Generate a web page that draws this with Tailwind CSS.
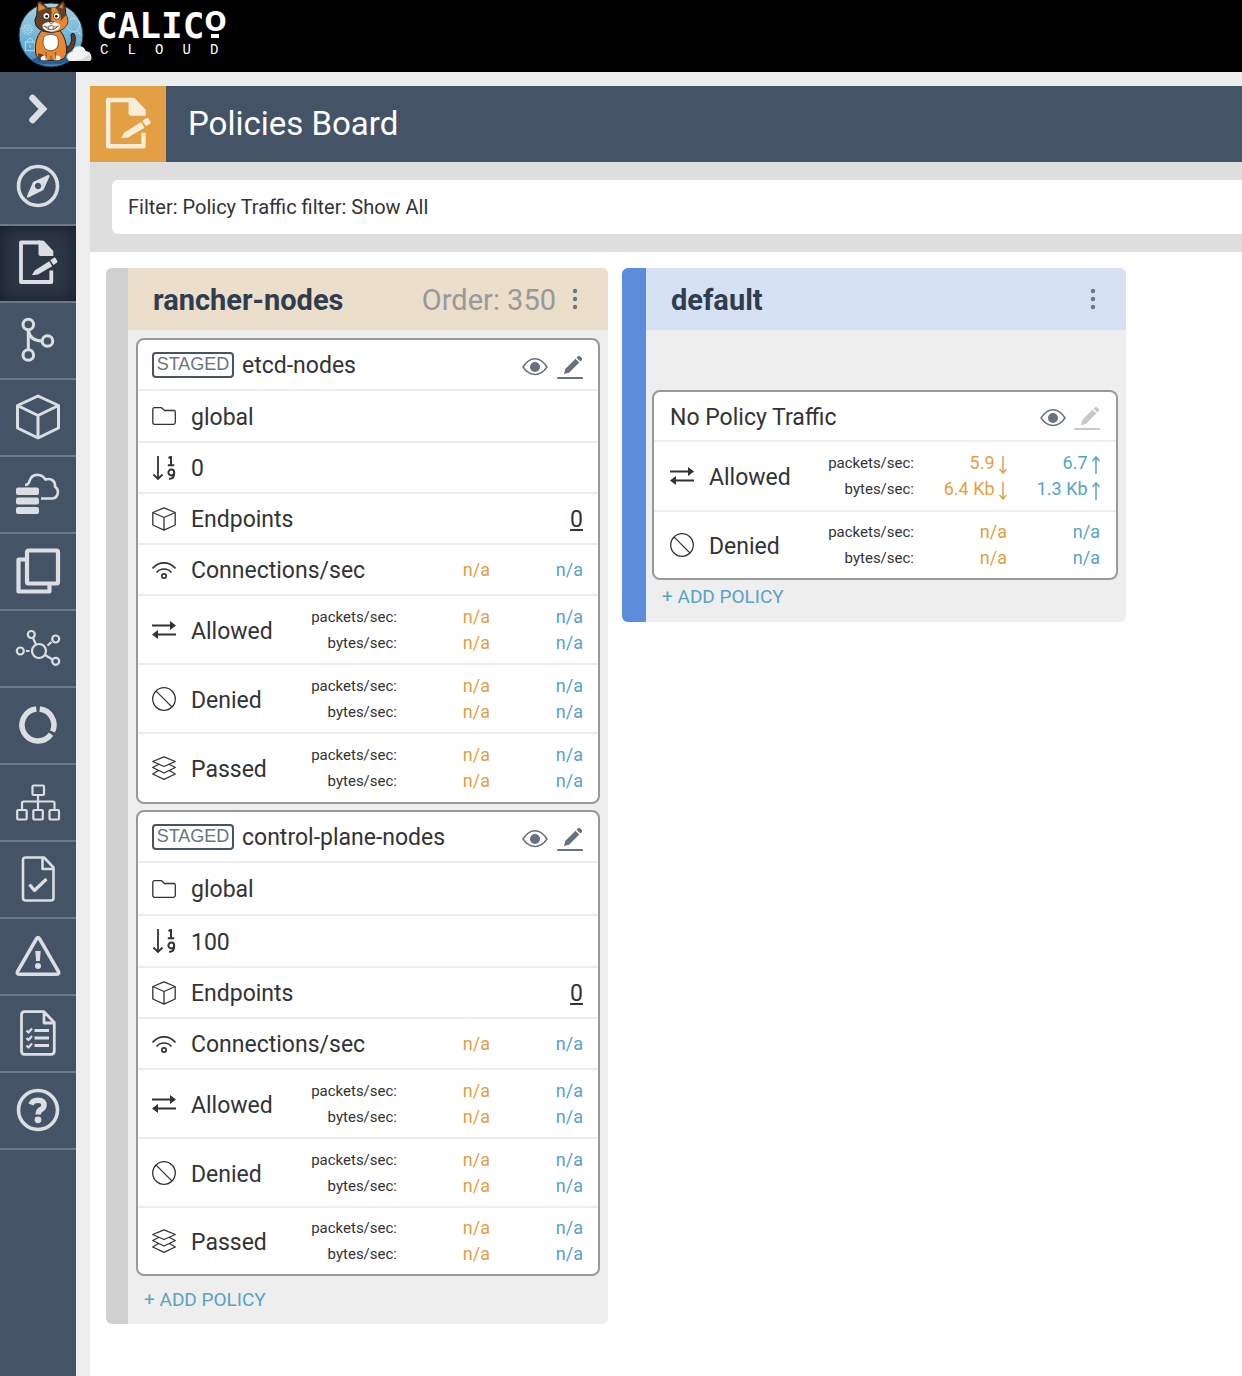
<!DOCTYPE html>
<html lang="en">
<head>
<meta charset="utf-8">
<meta name="viewport" content="width=device-width, initial-scale=1">
<title>Policies Board - Calico Cloud</title>
<script src="https://cdn.jsdelivr.net/npm/@tailwindcss/browser@4"></script>
</head>
<body class="flex min-h-screen flex-col overflow-x-hidden bg-white font-['Roboto',sans-serif] text-[#333]">

<!-- Shared icons -->
<svg class="hidden" aria-hidden="true">
  <symbol id="doc-edit" viewBox="0 0 48 48">
    <path d="M37.300 31.500v11.500H7V3.500h19" fill="none" stroke="currentColor" stroke-width="3.800" stroke-linejoin="round"/>
    <path d="M24.500 1.600H28q1.500 0 2.500 1L39.300 12v5H26.500q-2 0-2-2z" fill="currentColor"/>
    <path d="M18.300 36.200Q17.800 35.500 21 31.200L35.200 22.300l3 4.900L24 35.600zM36.300 21.300l3.700-2.500q1-.6 1.600.4l1.700 2.900q.5 1-.4 1.600l-3.500 2.300z" fill="currentColor"/>
  </symbol>
  <symbol id="eye" viewBox="0 0 26 20">
    <path d="M1 10C8-1 18-1 25 10C18 20 8 20 1 10Z" fill="none" stroke="currentColor" stroke-width="1.500" stroke-linejoin="round"/>
    <circle cx="13" cy="10" r="5" fill="currentColor"/>
  </symbol>
  <symbol id="pencil" viewBox="0 0 26 26">
    <path d="M7 20l1.200-5L18.500 4.700l3.800 3.800L12 18.800zM19.500 3.700L21 2.200q1-1 2 0l1.800 1.800q1 1 0 2L23.300 7.500z" fill="currentColor"/>
    <path d="M1 24H25" stroke="currentColor" stroke-width="2" stroke-linecap="round"/>
  </symbol>
  <symbol id="folder" viewBox="0 0 24 24">
    <path d="M.8 5.500Q.8 3.700 2.500 3.700H9.500L12.500 6.500H21.700Q23.300 6.500 23.300 8.200V18.500Q23.300 20.300 21.500 20.300H2.500Q.8 20.300 .8 18.500Z" fill="none" stroke="currentColor" stroke-width="1.300" stroke-linejoin="round"/>
  </symbol>
  <symbol id="sort" viewBox="0 0 24 24">
    <path d="M6 0V22.500M1.500 18.500L6 23L10.500 18.500" fill="none" stroke="currentColor" stroke-width="1.800"/>
    <path d="M16.500 2L19 .8V9M15.800 9.300H22.200" fill="none" stroke="currentColor" stroke-width="2"/>
    <path d="M22.200 16.500a2.900 2.900 0 1 1-5.800 0a2.900 2.900 0 1 1 5.800 0c0 5-1.500 6.500-5.200 6.200" fill="none" stroke="currentColor" stroke-width="2"/>
  </symbol>
  <symbol id="box" viewBox="0 0 24 24">
    <path d="M12 .8L23.200 5.500V18L12 23.200L.8 18V5.500ZM.8 5.500L12 10.500L23.200 5.500M12 10.500V23" fill="none" stroke="currentColor" stroke-width="1.300" stroke-linejoin="round"/>
  </symbol>
  <symbol id="wifi" viewBox="0 0 24 24">
    <path d="M.5 10.500C7 3 17 3 23.500 10.500M4.500 14.500C8.500 9.800 15.500 9.800 19.500 14.500" fill="none" stroke="currentColor" stroke-width="1.700"/>
    <circle cx="12" cy="18" r="2.200" fill="none" stroke="currentColor" stroke-width="1.700"/>
  </symbol>
  <symbol id="arrows" viewBox="0 0 24 24">
    <path d="M0 7.500H20M4 16.500H24" stroke="currentColor" stroke-width="2"/>
    <path d="M18 3L24 7.500L18 12ZM6 12L0 16.500L6 21Z" fill="currentColor"/>
  </symbol>
  <symbol id="denied" viewBox="0 0 24 24">
    <path d="M3.900 3.900L20.100 20.100" stroke="currentColor" stroke-width="1.300"/>
    <circle cx="12" cy="12" r="11.300" fill="none" stroke="currentColor" stroke-width="1.300"/>
  </symbol>
  <symbol id="layers" viewBox="0 0 24 24">
    <path d="M12 .8L23.300 5.500L12 10.500L.7 5.500ZM6.500 8.500L.7 11.500L12 17L23.300 11.500L17.500 8.500M6.500 14.500L.7 18L12 23.300L23.300 18L17.500 14.500" fill="none" stroke="currentColor" stroke-width="1.300" stroke-linejoin="round"/>
  </symbol>
  <symbol id="dots" viewBox="0 0 6 22">
    <g fill="currentColor"><circle cx="3" cy="3" r="2.200"/><circle cx="3" cy="11" r="2.200"/><circle cx="3" cy="19" r="2.200"/></g>
  </symbol>
</svg>

<header class="flex h-[72px] shrink-0 gap-[2px] bg-black pl-[10px] text-white">
  <svg class="h-[72px] w-[84px]" viewBox="0 0 252 216" aria-hidden="true">
    <defs><linearGradient id="sky" x1="0" y1="0" x2="0" y2="1"><stop offset="0" stop-color="#a5d3e6"/><stop offset=".6" stop-color="#69b2d8"/><stop offset="1" stop-color="#3b83bd"/></linearGradient></defs>
    <circle cx="123" cy="105" r="96" fill="url(#sky)" stroke="#333" stroke-width="3"/>
    <g fill="none" stroke="#b9dcec" stroke-width="3"><circle cx="53" cy="88" r="12"/><circle cx="53" cy="88" r="16" stroke-dasharray="5 5"/><circle cx="53" cy="88" r="5"/><path d="M46 126h29v26H46zM52 126v-5q8-12 16 0v5M60 135v8"/><circle cx="190" cy="75" r="20"/><path d="M201 90l10 14"/></g>
    <ellipse cx="123" cy="181" rx="56" ry="12" fill="#235f9c"/>
    <path d="M163 145Q188 138 184 111Q180 104 185 101Q194 96 196 112Q198 153 163 162Z" fill="#5d3b28" stroke="#2a1c15" stroke-width="3"/>
    <path d="M94 92Q72 120 77 158Q80 180 101 181H147Q170 177 170 153Q170 115 150 92Z" fill="#e58831" stroke="#2b1c14" stroke-width="3"/>
    <path d="M101 112q5-9 21-9t21 9q5 22-3 33q-18 15-36 0q-9-15-3-33" fill="#fff" stroke="#3a2418" stroke-width="2"/>
    <path d="M84 160l17 5l3 10l-9 6l-10-6z" fill="#5d3b28"/>
    <path d="M91 175q6-10 14-8l8 14H95zM133 181l4-14q13-2 15 9l-4 5z" fill="#fff"/>
    <path d="M108 156v23M137 156v23M123 168v11" stroke="#4a2a18" stroke-width="2"/>
    <path d="M80 46L83 7Q85 2 92 5L113 24H137L156 5Q162 1 164 9L168 45Q179 60 169 78Q154 96 123 97Q91 96 78 77Q70 60 80 46Z" fill="#644027" stroke="#2a1c15" stroke-width="3"/>
    <path d="M124 40L137 26L152 45V64L168 45Q177 61 169 77Q154 95 124 96Z" fill="#e58831"/>
    <path d="M124 24H137L146 36H124Z" fill="#e58831"/>
    <path d="M84 34L86 9L108 25ZM158 26L158 12L147 22Z" fill="#d98835"/>
    <path d="M97 76Q105 65 123 65Q141 65 151 76Q150 94 123 95Q98 94 97 76Z" fill="#f5f2ef"/>
    <circle cx="109" cy="48" r="10" fill="#fff" stroke="#2a1c15" stroke-width="2"/><circle cx="140" cy="48" r="10" fill="#fff" stroke="#2a1c15" stroke-width="2"/>
    <circle cx="110" cy="49" r="4" fill="#111"/><circle cx="139" cy="49" r="4" fill="#111"/>
    <path d="M116 65h15l-7 7zM101 78q11 8 23-2q11 10 22 2M105 80q6 9 19 9t18-9M116 82v7M130 82v7" fill="none" stroke="#30221d" stroke-width="2"/>
    <path d="M178 183Q165 173 175 162Q178 156 187 155Q193 136 212 139Q223 141 227 153Q242 154 244 170Q246 183 236 183Z" fill="#f3f3f3"/>
    <path d="M178 183q35 3 58-20q9 9 5 17q-2 3-5 3z" fill="#d9d9da"/>
  </svg>
  <div class="pt-[10px] font-bold">
    <div class="flex font-['DejaVu_Sans_Mono',monospace] text-4xl leading-8">
      <span>CALIC</span><span class="flex flex-col items-center font-['DejaVu_Sans',sans-serif] text-[26px] leading-6"><span>O</span><span class="h-1 w-2 bg-white"></span></span>
    </div>
    <div class="flex justify-between pr-[8px] pl-1 font-['Liberation_Mono',monospace] text-[14px] leading-4 font-normal"><span>C</span><span>L</span><span>O</span><span>U</span><span>D</span></div>
  </div>
</header>

<div class="flex grow">
  <nav aria-label="Main" class="w-[76px] shrink-0 bg-[#445466] text-[#dbdee3] [&>a]:flex [&>a]:h-[77px] [&>a]:items-center [&>a]:justify-center [&>a]:border-b-2 [&>a]:border-[#6d7988] [&>a]:pb-px [&_svg]:size-12">
    <a href="#" aria-label="Expand"><svg viewBox="0 0 48 48" fill="none" stroke="currentColor" stroke-width="6.500" stroke-linecap="round"><path d="M18.500 13L29 24L18.500 35" stroke-linejoin="miter"/></svg></a>
    <a href="#" aria-label="Dashboard"><svg viewBox="0 0 48 48"><circle cx="24" cy="24" r="19.500" fill="none" stroke="currentColor" stroke-width="3.600"/><path fill="currentColor" fill-rule="evenodd" d="M34 13q2-.5 1.500 1.500L29.500 28L14.500 35.500q-2 .5-1.500-1.500L19 20ZM24 20.800a3.200 3.200 0 1 0 .01 0z"/></svg></a>
    <a href="#" aria-label="Policies" aria-current="page" class="bg-[#2c3846] shadow-[inset_0_0_18px_#151c26]"><svg><use href="#doc-edit"/></svg></a>
    <a href="#" aria-label="Tiers"><svg viewBox="0 0 48 48" fill="none" stroke="currentColor" stroke-width="3"><circle cx="14.300" cy="8.500" r="5.300"/><circle cx="33.500" cy="25" r="5.300"/><circle cx="14.300" cy="39" r="5.300"/><path d="M14.300 14V34M14.300 14Q16 25 28 25"/></svg></a>
    <a href="#" aria-label="Endpoints"><svg viewBox="0 0 48 48" fill="none" stroke="currentColor" stroke-width="3" stroke-linejoin="round"><path d="M24 3L44.500 12.500V35L24 45L3.500 35V12.500ZM3.500 12.500L24 22.500L44.500 12.500M24 22.500V44"/></svg></a>
    <a href="#" aria-label="Network sets"><svg viewBox="0 0 48 48"><g fill="currentColor"><rect x="2" y="17.500" width="23" height="7.500" rx="2"/><rect x="2" y="27.500" width="23" height="7" rx="2"/><rect x="2" y="37" width="23" height="7" rx="2"/></g><path d="M11 15C14 15 15 13 15.500 11C17 6 21 4.500 25 5c3 .5 5 2 6.500 4.500c6-2 10 2 9.500 7c3 2.500 3.500 5 2.500 8c-1 3-3 4-6 4H27" fill="none" stroke="currentColor" stroke-width="2.600"/></svg></a>
    <a href="#" aria-label="Managed clusters"><svg viewBox="0 0 48 48" fill="none" stroke="currentColor" stroke-width="4.200" stroke-linejoin="round"><rect x="13" y="3.500" width="31" height="33" rx="1.500"/><path d="M12 12.500H4.500V44.500H35.500V38"/></svg></a>
    <a href="#" aria-label="Service graph"><svg viewBox="0 0 48 48" fill="none" stroke="currentColor" stroke-width="2.200"><circle cx="25" cy="27" r="7"/><circle cx="17.300" cy="10.500" r="3.500"/><circle cx="41.700" cy="15" r="3.500"/><circle cx="41.700" cy="37.300" r="3.500"/><circle cx="6.300" cy="27" r="3.500"/><path d="M19 14L22 20.500M31 31L38.500 35.500M33.500 21.500L37.500 18M12 27H15.500"/></svg></a>
    <a href="#" aria-label="Statistics"><svg viewBox="0 0 48 48" fill="none" stroke="currentColor" stroke-width="5.500"><path d="M25.700 8.100A16 16 0 0 1 38.600 30.500M37.100 33.200A16 16 0 1 1 22.300 8.100"/></svg></a>
    <a href="#" aria-label="Topology"><svg viewBox="0 0 48 48" fill="none" stroke="currentColor" stroke-width="2.200"><rect x="18.500" y="7.500" width="11.500" height="9.500" rx="1"/><rect x="3.200" y="32" width="9.500" height="9.500" rx="1"/><rect x="19.300" y="32" width="9.500" height="9.500" rx="1"/><rect x="35.500" y="32" width="9.500" height="9.500" rx="1"/><path d="M24 17V32M8 32V25Q8 23.500 9.500 23.500H39Q40.500 23.500 40.500 25V32"/></svg></a>
    <a href="#" aria-label="Compliance"><svg viewBox="0 0 48 48" fill="none" stroke="currentColor" stroke-width="2.600" stroke-linejoin="round"><path d="M11.500 2.500H30L39.500 12.500V43Q39.500 45.500 37 45.500H11.500Q9 45.500 9 43V5Q9 2.500 11.500 2.500ZM28.500 2.500V14H39.500"/><path d="M15.500 29.500L20.500 35.500L32.500 24" stroke-width="3.200"/></svg></a>
    <a href="#" aria-label="Alerts"><svg viewBox="0 0 48 48"><path d="M22.600 6.500Q24 4.500 25.400 6.500L44.500 39.500Q45.500 42.200 43 42.200H5Q2.500 42.200 3.500 39.500Z" fill="none" stroke="currentColor" stroke-width="3.500"/><path d="M21.300 19h5.400l-.8 10h-3.800z" fill="currentColor"/><circle cx="24" cy="34" r="3" fill="currentColor"/></svg></a>
    <a href="#" aria-label="Activity"><svg viewBox="0 0 48 48" fill="none" stroke="currentColor" stroke-width="2.800" stroke-linejoin="round"><path d="M10.500 2.700H30L40.300 13.500V42Q40.300 45.300 37 45.300H10.500Q7.500 45.300 7.500 42V6Q7.500 2.700 10.500 2.700ZM30 3V14H40"/><path d="M20.500 21.500H35M20.500 29H35M20.500 36.500H35"/><path d="M12.500 21.500L14.500 23.500L18 19.500M12.500 29L14.500 31L18 27M12.500 36.500L14.500 38.500L18 34.500" stroke-width="2.200"/></svg></a>
    <a href="#" aria-label="Help"><svg viewBox="0 0 48 48"><circle cx="24" cy="24" r="19.500" fill="none" stroke="currentColor" stroke-width="3.600"/><path d="M17 18.500Q18.500 14.200 24 14.200Q30 14.200 30 19Q30 22 27 23.500Q24.200 25 24.200 28.500" fill="none" stroke="currentColor" stroke-width="5.500"/><circle cx="24" cy="33.800" r="3.400" fill="currentColor"/></svg></a>
  </nav>

  <div class="flex min-w-0 grow flex-col bg-[#ededed] pt-[14px] pl-[14px]">
    <div class="flex h-[76px] items-center bg-[#445466] text-white">
      <div class="flex size-[76px] items-center justify-center bg-[#e29f43] text-[#f9ecd9]"><svg class="h-[56px] w-[56px]" aria-hidden="true"><use href="#doc-edit"/></svg></div>
      <h1 class="pl-[22px] text-[33px]">Policies Board</h1>
    </div>
    <div class="bg-[#dedede] py-[18px] pl-[22px]">
      <button type="button" class="block h-[54px] w-full rounded-l-md bg-white pl-4 text-left text-[20px]">Filter: Policy Traffic filter: Show All</button>
    </div>

    <main class="flex grow items-start gap-[14px] bg-white p-4">
      <section class="flex shrink-0 overflow-hidden rounded-md bg-[#eee]">
        <div class="w-[22px] bg-[#d1d1d1]"></div>
        <div class="w-[480px]">
          <div class="flex h-[62px] items-center bg-[#ebdecb] pt-1 pr-[30px] pl-[25px]">
            <h2 class="grow text-[29px] font-bold text-[#2f3d4e]">rancher-nodes</h2>
            <span class="text-[29px] text-[#999]">Order: 350</span>
            <button type="button" aria-label="Tier menu" class="mb-1 ml-4 text-[#6a7887]"><svg class="h-[22px] w-[6px]"><use href="#dots"/></svg></button>
          </div>
          <div class="flex flex-col gap-[6px] px-2 pt-2">

            <article class="rounded-lg border-2 border-[#999] bg-white">
              <div class="flex h-[51px] items-center border-b-2 border-[#ededed] pt-1 pr-[15px] pl-[14px]">
                <span class="mb-1 flex h-[26px] w-[82px] items-center justify-center rounded border-2 border-[#465464] font-['Liberation_Sans',sans-serif] text-[18px] text-[#6a7480]">STAGED</span>
                <h3 class="grow pl-2 text-[23px]">etcd-nodes</h3>
                <button type="button" aria-label="View" class="text-[#66727e]"><svg class="h-5 w-[26px]"><use href="#eye"/></svg></button>
                <button type="button" aria-label="Edit" class="ml-[9px] text-[#66727e]"><svg class="size-[26px]"><use href="#pencil"/></svg></button>
              </div>
              <table class="w-full table-fixed [&_div]:flex [&_div]:items-center [&_div]:gap-[15px] [&_div]:pt-1 [&_div]:pl-[14px] [&_svg]:mb-1 [&_svg]:size-6 [&_svg]:shrink-0 [&_th]:text-left [&_th]:text-[23px] [&_th]:font-normal [&_tr]:border-b-2 [&_tr]:border-[#ededed] [&_tr:last-child]:border-b-0">
                <colgroup><col class="w-[154px]"><col class="w-[105px]"><col class="w-[93px]"><col></colgroup>
                <tbody>
                  <tr class="h-[51px]"><th colspan="4"><div><svg><use href="#folder"/></svg>global</div></th></tr>
                  <tr class="h-[51px]"><th colspan="4"><div><svg><use href="#sort"/></svg>0</div></th></tr>
                  <tr class="h-[51px]"><th colspan="3"><div><svg><use href="#box"/></svg>Endpoints</div></th><td class="pt-1 pr-[15px] text-right text-[23px]"><a href="#" class="underline underline-offset-2">0</a></td></tr>
                  <tr class="h-[51px] text-right text-[18px]"><th colspan="2"><div><svg><use href="#wifi"/></svg>Connections/sec</div></th><td class="text-[#e29f43]">n/a</td><td class="pr-[15px] text-[#58a3c3]">n/a</td></tr>
                  <tr class="h-[69px] text-right text-[18px] leading-[26px]"><th><div><svg><use href="#arrows"/></svg>Allowed</div></th><td class="text-[15px] leading-[26px]">packets/sec:<br>bytes/sec:</td><td class="text-[#e29f43]">n/a<br>n/a</td><td class="pr-[15px] text-[#58a3c3]">n/a<br>n/a</td></tr>
                  <tr class="h-[69px] text-right text-[18px] leading-[26px]"><th><div><svg><use href="#denied"/></svg>Denied</div></th><td class="text-[15px] leading-[26px]">packets/sec:<br>bytes/sec:</td><td class="text-[#e29f43]">n/a<br>n/a</td><td class="pr-[15px] text-[#58a3c3]">n/a<br>n/a</td></tr>
                  <tr class="h-[69px] text-right text-[18px] leading-[26px]"><th><div><svg><use href="#layers"/></svg>Passed</div></th><td class="text-[15px] leading-[26px]">packets/sec:<br>bytes/sec:</td><td class="text-[#e29f43]">n/a<br>n/a</td><td class="pr-[15px] text-[#58a3c3]">n/a<br>n/a</td></tr>
                </tbody>
              </table>
            </article>

            <article class="rounded-lg border-2 border-[#999] bg-white">
              <div class="flex h-[51px] items-center border-b-2 border-[#ededed] pt-1 pr-[15px] pl-[14px]">
                <span class="mb-1 flex h-[26px] w-[82px] items-center justify-center rounded border-2 border-[#465464] font-['Liberation_Sans',sans-serif] text-[18px] text-[#6a7480]">STAGED</span>
                <h3 class="grow pl-2 text-[23px]">control-plane-nodes</h3>
                <button type="button" aria-label="View" class="text-[#66727e]"><svg class="h-5 w-[26px]"><use href="#eye"/></svg></button>
                <button type="button" aria-label="Edit" class="ml-[9px] text-[#66727e]"><svg class="size-[26px]"><use href="#pencil"/></svg></button>
              </div>
              <table class="w-full table-fixed [&_div]:flex [&_div]:items-center [&_div]:gap-[15px] [&_div]:pt-1 [&_div]:pl-[14px] [&_svg]:mb-1 [&_svg]:size-6 [&_svg]:shrink-0 [&_th]:text-left [&_th]:text-[23px] [&_th]:font-normal [&_tr]:border-b-2 [&_tr]:border-[#ededed] [&_tr:last-child]:border-b-0">
                <colgroup><col class="w-[154px]"><col class="w-[105px]"><col class="w-[93px]"><col></colgroup>
                <tbody>
                  <tr class="h-[52px]"><th colspan="4"><div><svg><use href="#folder"/></svg>global</div></th></tr>
                  <tr class="h-[52px]"><th colspan="4"><div><svg><use href="#sort"/></svg>100</div></th></tr>
                  <tr class="h-[51px]"><th colspan="3"><div><svg><use href="#box"/></svg>Endpoints</div></th><td class="pt-1 pr-[15px] text-right text-[23px]"><a href="#" class="underline underline-offset-2">0</a></td></tr>
                  <tr class="h-[51px] text-right text-[18px]"><th colspan="2"><div><svg><use href="#wifi"/></svg>Connections/sec</div></th><td class="text-[#e29f43]">n/a</td><td class="pr-[15px] text-[#58a3c3]">n/a</td></tr>
                  <tr class="h-[69px] text-right text-[18px] leading-[26px]"><th><div><svg><use href="#arrows"/></svg>Allowed</div></th><td class="text-[15px] leading-[26px]">packets/sec:<br>bytes/sec:</td><td class="text-[#e29f43]">n/a<br>n/a</td><td class="pr-[15px] text-[#58a3c3]">n/a<br>n/a</td></tr>
                  <tr class="h-[69px] text-right text-[18px] leading-[26px]"><th><div><svg><use href="#denied"/></svg>Denied</div></th><td class="text-[15px] leading-[26px]">packets/sec:<br>bytes/sec:</td><td class="text-[#e29f43]">n/a<br>n/a</td><td class="pr-[15px] text-[#58a3c3]">n/a<br>n/a</td></tr>
                  <tr class="h-[67px] text-right text-[18px] leading-[26px]"><th><div><svg><use href="#layers"/></svg>Passed</div></th><td class="text-[15px] leading-[26px]">packets/sec:<br>bytes/sec:</td><td class="text-[#e29f43]">n/a<br>n/a</td><td class="pr-[15px] text-[#58a3c3]">n/a<br>n/a</td></tr>
                </tbody>
              </table>
            </article>
          </div>
          <button type="button" class="block h-12 pt-px pl-4 text-[19px] text-[#58a3c3]">+ ADD POLICY</button>
        </div>
      </section>

      <section class="flex shrink-0 overflow-hidden rounded-md bg-[#eee]">
        <div class="w-6 bg-[#5b8ddb]"></div>
        <div class="w-[480px]">
          <div class="flex h-[62px] items-center bg-[#d6e2f4] pt-1 pr-[30px] pl-[25px]">
            <h2 class="grow text-[29px] font-bold text-[#2f3d4e]">default</h2>
            <button type="button" aria-label="Tier menu" class="mb-1 text-[#6a7887]"><svg class="h-[22px] w-[6px]"><use href="#dots"/></svg></button>
          </div>
          <div class="pt-[60px] pr-2 pl-[6px]">
            <article class="rounded-lg border-2 border-[#999] bg-white">
              <div class="flex h-[50px] items-center border-b-2 border-[#ededed] pt-1 pr-4 pl-4">
                <h3 class="grow text-[23px]">No Policy Traffic</h3>
                <button type="button" aria-label="View" class="text-[#66727e]"><svg class="h-5 w-[26px]"><use href="#eye"/></svg></button>
                <button type="button" aria-label="Edit" disabled class="ml-2 text-[#c5c8cc]"><svg class="size-[26px]"><use href="#pencil"/></svg></button>
              </div>
              <table class="w-full table-fixed [&_div]:flex [&_div]:items-center [&_div]:gap-[15px] [&_div]:pt-1 [&_div]:pl-4 [&_th]:text-left [&_th]:text-[23px] [&_th]:font-normal">
                <colgroup><col class="w-[154px]"><col class="w-[106px]"><col class="w-[93px]"><col></colgroup>
                <tbody>
                  <tr class="h-[69px] border-b-2 border-[#ededed] text-right text-[18px] leading-[26px]"><th><div><svg class="mb-1 size-6 shrink-0"><use href="#arrows"/></svg>Allowed</div></th><td class="text-[15px] leading-[26px]">packets/sec:<br>bytes/sec:</td>
                    <td class="text-[#e29f43]">5.9 <svg class="inline h-[18px] w-2 align-[-5px]" viewBox="0 0 8 18" fill="none" stroke="currentColor" stroke-width="1.500"><path d="M4 0V17M.5 13L4 17L7.500 13"/></svg><br>6.4 Kb <svg class="inline h-[18px] w-2 align-[-5px]" viewBox="0 0 8 18" fill="none" stroke="currentColor" stroke-width="1.500"><path d="M4 0V17M.5 13L4 17L7.500 13"/></svg></td>
                    <td class="pr-4 text-[#58a3c3]">6.7 <svg class="inline h-[18px] w-2 align-[-5px]" viewBox="0 0 8 18" fill="none" stroke="currentColor" stroke-width="1.500"><path d="M4 18V1M.5 5L4 1L7.500 5"/></svg><br>1.3 Kb <svg class="inline h-[18px] w-2 align-[-5px]" viewBox="0 0 8 18" fill="none" stroke="currentColor" stroke-width="1.500"><path d="M4 18V1M.5 5L4 1L7.500 5"/></svg></td></tr>
                  <tr class="h-[67px] text-right text-[18px] leading-[26px]"><th><div><svg class="mb-1 size-6 shrink-0"><use href="#denied"/></svg>Denied</div></th><td class="text-[15px] leading-[26px]">packets/sec:<br>bytes/sec:</td><td class="text-[#e29f43]">n/a<br>n/a</td><td class="pr-4 text-[#58a3c3]">n/a<br>n/a</td></tr>
                </tbody>
              </table>
            </article>
          </div>
          <button type="button" class="block h-[42px] pb-[8px] pl-4 text-[19px] text-[#58a3c3]">+ ADD POLICY</button>
        </div>
      </section>
    </main>
  </div>
</div>
</body>
</html>
